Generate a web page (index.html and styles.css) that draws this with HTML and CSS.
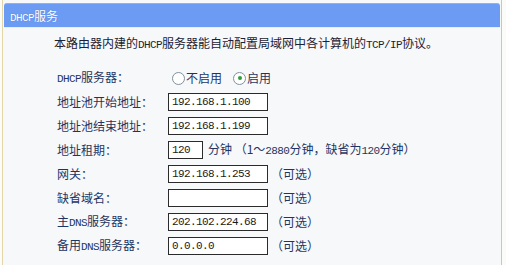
FILE: index.html
```html
<!DOCTYPE html>
<html lang="zh-CN">
<head>
<meta charset="utf-8">
<title>DHCP服务</title>
<link rel="stylesheet" href="styles.css">
</head>
<body>
<div class="frame">
  <div class="panel">
    <div class="title"><span class="en">DHCP</span>服务</div>
    <div class="rule"></div>
    <p class="desc">本路由器内建的<span class="en">DHCP</span>服务器能自动配置局域网中各计算机的<span class="en">TCP/IP</span>协议。</p>
    <div class="form">
      <div class="label"><span class="en">DHCP</span>服务器：</div>
      <div class="ctrl">
        <span class="radio"></span><span class="rtext">不启用</span>
        <span class="radio on"></span><span class="rtext">启用</span>
      </div>

      <div class="label">地址池开始地址：</div>
      <div class="ctrl"><span class="field">192.168.1.100</span></div>

      <div class="label">地址池结束地址：</div>
      <div class="ctrl"><span class="field">192.168.1.199</span></div>

      <div class="label">地址租期：</div>
      <div class="ctrl"><span class="field short">120</span><span class="note">分钟 （1～<span class="en">2880</span>分钟，缺省为<span class="en">120</span>分钟）</span></div>

      <div class="label">网关：</div>
      <div class="ctrl"><span class="field">192.168.1.253</span><span class="opt">（可选）</span></div>

      <div class="label">缺省域名：</div>
      <div class="ctrl"><span class="field"></span><span class="opt">（可选）</span></div>

      <div class="label">主<span class="en">DNS</span>服务器：</div>
      <div class="ctrl"><span class="field">202.102.224.68</span><span class="opt">（可选）</span></div>

      <div class="label">备用<span class="en">DNS</span>服务器：</div>
      <div class="ctrl"><span class="field">0.0.0.0</span><span class="opt">（可选）</span></div>
    </div>
  </div>
</div>
</body>
</html>
```

FILE: styles.css
```css
html, body {
  margin: 0;
  padding: 0;
  background: #fbfbf8;
  width: 506px;
  height: 265px;
  overflow: hidden;
}

body {
  font-family: "Noto Sans CJK SC", "Liberation Sans", sans-serif;
  font-size: 12px;
  color: #1c2b4a;
}

.frame {
  margin-left: 2px;
  width: 500px;
  height: 265px;
  border-left: 1px solid #e3d6aa;
  border-right: 1px solid #d9c690;
  background: #f7f8f9;
  padding: 3px 1px 0 1px;
  box-sizing: border-box;
}

.panel {
  height: 100%;
}

.title {
  height: 24px;
  line-height: 23px;
  background: #6b9bf3;
  border-top: 1px solid #8fb0ef;
  border-radius: 3px 3px 0 0;
  color: #ffffff;
  padding-left: 6px;
  text-shadow: 0 0 1px #4a72c0;
  box-sizing: border-box;
}

.rule {
  height: 1px;
  background: #e9eef6;
}

.en {
  font-family: "Liberation Mono", "DejaVu Sans Mono", monospace;
  font-size: 11px;
  letter-spacing: -0.6px;
}

.desc {
  margin: 0;
  padding-left: 50px;
  height: 38px;
  line-height: 30px;
  color: #1b2233;
}

.form {
  display: grid;
  grid-template-columns: 111px 1fr;
  grid-auto-rows: 24px;
  padding-left: 53px;
  align-items: center;
}

.label {
  color: #1e3563;
  line-height: 16px;
}

.ctrl {
  display: flex;
  align-items: center;
  height: 24px;
}

.radio {
  width: 11px;
  height: 11px;
  border: 1px solid #8090a0;
  border-radius: 50%;
  background: #ffffff;
  box-sizing: content-box;
  margin-left: 4px;
  margin-right: 1px;
  position: relative;
}

.radio.on {
  margin-left: 11px;
}

.radio.on::after {
  content: "";
  position: absolute;
  left: 3.5px;
  top: 3.5px;
  width: 4px;
  height: 4px;
  border-radius: 50%;
  background: #2e9d3a;
}

.rtext {
  color: #1e3563;
  line-height: 16px;
}

.field {
  display: block;
  width: 100px;
  height: 18px;
  box-sizing: border-box;
  border: 1px solid #2b2b2b;
  background: #ffffff;
  font-family: "Liberation Mono", "DejaVu Sans Mono", monospace;
  font-size: 11px;
  letter-spacing: -0.6px;
  line-height: 16px;
  padding-left: 3px;
  color: #1a1a1a;
}

.field.short {
  width: 35px;
}

.note {
  margin-left: 5px;
  color: #1e3563;
  line-height: 16px;
}

.opt {
  margin-left: 3px;
  color: #1e3563;
  line-height: 16px;
}
```
